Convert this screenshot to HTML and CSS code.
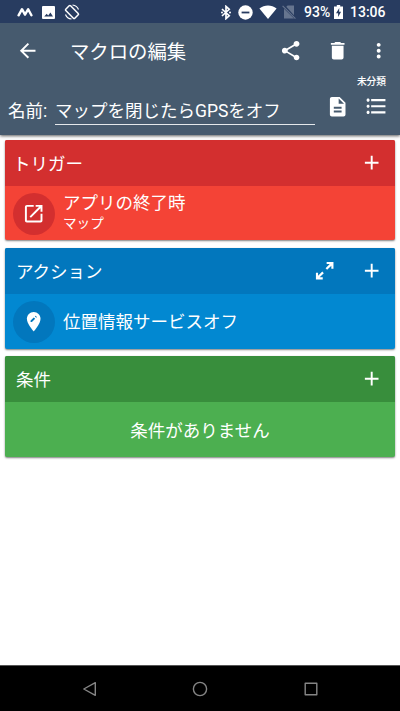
FILE: index.html
```html
<!DOCTYPE html>
<html lang="ja">
<head>
<meta charset="utf-8">
<title>マクロの編集</title>
<link rel="stylesheet" href="styles.css">
</head>
<body>
<div class="screen">
  <header class="top">
    <div class="status">
      <svg class="s-macro" viewBox="0 0 16 10"><path d="M1.6 8.3 5 2.2 8 7.6 11.2 2.2 14.4 8.3" fill="none" stroke="#fff" stroke-width="2.4" stroke-linejoin="round" stroke-linecap="round"/></svg>
      <svg class="s-image" viewBox="0 0 13 13"><rect width="13" height="13" rx="1" fill="#fff"/><path d="M2.2 10.6 4.7 7.8 6.2 9.4 8.4 6.6 11 10.6Z" fill="#283c60"/></svg>
      <svg class="s-rotate" viewBox="0 0 16 16"><path d="M1.500 10.500A7 7 0 0 0 7.500 15M14.500 5.500A7 7 0 0 0 8.500 1" fill="none" stroke="#fff" stroke-width="1.200"/><rect x="4.600" y="1.600" width="6.800" height="12.800" rx="1" transform="rotate(-45 8 8)" fill="none" stroke="#fff" stroke-width="1.500"/></svg>
      <span class="grow"></span>
      <svg class="s-bt" viewBox="0 0 10 15"><path d="M1 4 8.2 10.7 5 13.6V1.4L8.2 4.3 1 11" fill="none" stroke="#fff" stroke-width="1.700"/><circle cx="1" cy="7.5" r="1" fill="#fff"/><circle cx="9" cy="7.5" r="1" fill="#fff"/></svg>
      <svg class="s-dnd" viewBox="0 0 15 15"><circle cx="7.5" cy="7.5" r="7.2" fill="#fff"/><path d="M3.6 7.5H11.4" stroke="#283c60" stroke-width="1.8"/></svg>
      <svg class="s-wifi" viewBox="0 0 18 14"><path d="M.4 3.4C5.5-.5 12.5-.5 17.6 3.4L9 13.9Z" fill="#fff"/></svg>
      <svg class="s-sim" viewBox="0 0 14 14"><path d="M4.3 1.7 5.6.6H12V10.2ZM2 3.7 12 13.4H2Z" fill="#66758f"/><path d="M.6.8 13.4 13.6" stroke="#66758f" stroke-width="1.1"/></svg>
      <span class="pct">93%</span>
      <svg class="s-bat" viewBox="0 0 9 14"><path d="M2.8 0H6.2V1.4H9V14H0V1.4H2.8Z" fill="#fff"/><path d="M5.3 3 2 8.3H4.1V12L7.1 6.8H5.1Z" fill="#283c60"/></svg>
      <span class="clock">13:06</span>
    </div>
    <div class="toolbar">
      <svg class="icon back" viewBox="0 0 24 24"><path d="M20 11H7.83l5.59-5.59L12 4l-8 8 8 8 1.41-1.41L7.83 13H20v-2z"/></svg>
      <h1>マクロの編集</h1>
      <span class="grow"></span>
      <svg class="icon" viewBox="0 0 24 24"><path d="M18 16.08c-.76 0-1.44.3-1.96.77L8.91 12.7c.05-.23.09-.46.09-.7s-.04-.47-.09-.7l7.05-4.11c.54.5 1.25.81 2.04.81 1.66 0 3-1.34 3-3s-1.34-3-3-3-3 1.34-3 3c0 .24.04.47.09.7L8.04 9.81C7.5 9.31 6.79 9 6 9c-1.66 0-3 1.34-3 3s1.34 3 3 3c.79 0 1.5-.31 2.04-.81l7.12 4.16c-.05.21-.08.43-.08.65 0 1.61 1.31 2.92 2.92 2.92s2.92-1.31 2.92-2.92-1.31-2.92-2.92-2.92z"/></svg>
      <svg class="icon trash" viewBox="0 0 24 24"><path d="M6 19c0 1.1.9 2 2 2h8c1.1 0 2-.9 2-2V7H6v12zM19 4h-3.500l-1-1h-5l-1 1H5v2h14V4z"/></svg>
      <svg class="icon more" viewBox="0 0 24 24"><path d="M12 8c1.100 0 2-.9 2-2s-.9-2-2-2-2 .9-2 2 .9 2 2 2zm0 2c-1.100 0-2 .9-2 2s.9 2 2 2 2-.9 2-2-.9-2-2-2zm0 6c-1.100 0-2 .9-2 2s.9 2 2 2 2-.9 2-2-.9-2-2-2z"/></svg>
    </div>
    <div class="category">未分類</div>
    <div class="name-row">
      <span class="label">名前:</span>
      <span class="field">マップを閉じたらGPSをオフ</span>
      <svg class="icon doc" viewBox="0 0 24 24"><path d="M14 2H6c-1.100 0-1.990.9-1.990 2L4 20c0 1.100.89 2 1.990 2H18c1.100 0 2-.9 2-2V8l-6-6zm2 16H8v-2h8v2zm0-4H8v-2h8v2zm-3-5V3.500L18.500 9H13z"/></svg>
      <svg class="icon list" viewBox="0 0 24 24"><path d="M4 10.500c-.83 0-1.500.67-1.500 1.500s.67 1.500 1.500 1.500 1.500-.67 1.500-1.500-.67-1.500-1.500-1.500zm0-6c-.83 0-1.500.67-1.500 1.500S3.170 7.500 4 7.500 5.500 6.830 5.500 6 4.830 4.500 4 4.500zm0 12c-.83 0-1.500.68-1.500 1.500s.68 1.500 1.500 1.500 1.500-.68 1.500-1.500-.67-1.500-1.500-1.500zM7 19h14v-2H7v2zm0-6h14v-2H7v2zm0-8v2h14V5H7z"/></svg>
    </div>
  </header>
  <main>
    <section class="card red">
      <div class="head head-first"><h2>トリガー</h2><span class="grow"></span>
        <svg class="icon" viewBox="0 0 24 24"><path d="M19 13h-6v6h-2v-6H5v-2h6V5h2v6h6v2z"/></svg></div>
      <div class="body">
        <span class="badge"><svg class="icon" viewBox="0 0 24 24"><path d="M19 19H5V5h7V3H5c-1.110 0-2 .9-2 2v14c0 1.100.89 2 2 2h14c1.100 0 2-.9 2-2v-7h-2v7zM14 3v2h3.590l-9.830 9.830 1.410 1.410L19 6.410V10h2V3h-7z"/></svg></span>
        <div class="texts"><div class="main-text">アプリの終了時</div><div class="sub-text">マップ</div></div>
      </div>
    </section>
    <section class="card blue">
      <div class="head"><h2>アクション</h2><span class="grow"></span>
        <svg class="icon expand" viewBox="0 0 24 24"><path d="M14 3H21V10H18.800V6.800L14.500 11.100 12.900 9.500 17.200 5.200H14ZM10 21H3V14H5.200V17.200L9.500 12.900 11.100 14.500 6.800 18.800H10Z"/></svg>
        <svg class="icon" viewBox="0 0 24 24"><path d="M19 13h-6v6h-2v-6H5v-2h6V5h2v6h6v2z"/></svg></div>
      <div class="body">
        <span class="badge"><svg class="icon" viewBox="0 0 24 24"><path d="M12 2C8.130 2 5 5.130 5 9c0 5.250 7 13 7 13s7-7.750 7-13c0-3.870-3.130-7-7-7z"/><path class="pencil" d="M8.800 10.900V12.300H10.200L13.500 9 12.100 7.600ZM14.600 7.900 13.200 6.500 13.900 5.800 15.300 7.200Z"/></svg></span>
        <div class="texts"><div class="main-text">位置情報サービスオフ</div></div>
      </div>
    </section>
    <section class="card green">
      <div class="head"><h2>条件</h2><span class="grow"></span>
        <svg class="icon" viewBox="0 0 24 24"><path d="M19 13h-6v6h-2v-6H5v-2h6V5h2v6h6v2z"/></svg></div>
      <div class="body empty">条件がありません</div>
    </section>
  </main>
  <nav>
    <svg viewBox="0 0 16 16"><path d="M13.300 1.700V14.300L1.800 8Z"/></svg>
    <svg viewBox="0 0 16 16"><circle cx="8" cy="8" r="6.600"/></svg>
    <svg viewBox="0 0 16 16"><rect x="2.200" y="2.200" width="11.600" height="11.600"/></svg>
  </nav>
</div>
</body>
</html>
```
FILE: styles.css
```css
* { box-sizing: border-box; }
body {
  margin: 0;
  background: #fff;
  color: #fff;
  font-family: Roboto, "Noto Sans CJK JP", sans-serif;
  font-size: 17.5px;
}
h1, h2 { margin: 0; font-weight: 400; white-space: nowrap; }
svg { display: block; flex: none; }
.screen { width: 400px; height: 711px; display: flex; flex-direction: column; overflow: hidden; }
.grow { flex: 1; }
.icon { width: 23.4px; height: 23.4px; fill: #fff; }

.top { height: 135px; flex: none; background: #465a6e; box-shadow: 0 1px 3px rgba(0, 0, 0, .65); }
.status {
  height: 23px;
  display: flex;
  align-items: center;
  padding: 1px 16px 0 17px;
  background: #283c60;
  font-size: 14px;
  font-weight: 500;
}
.s-macro { width: 16px; height: 10px; }
.s-image { width: 13px; height: 13px; margin-left: 9px; }
.s-rotate { width: 16px; height: 16px; margin-left: 9px; }
.s-bt { width: 10px; height: 15px; margin-right: 7px; }
.s-dnd { width: 15px; height: 15px; margin-right: 6px; }
.s-wifi { width: 18px; height: 14px; margin-right: 5px; }
.s-sim { width: 14px; height: 14px; margin-right: 8px; }
.pct { width: 26px; white-space: nowrap; }
.s-bat { width: 9px; height: 14px; margin: 0 7px 0 4px; }
.clock { width: 34px; white-space: nowrap; }

.toolbar { height: 55px; display: flex; align-items: center; padding: 0 10px 0 15.5px; }
.toolbar h1 { margin-left: 31px; font-size: 19.4px; }
.trash { margin-left: 23.500px; }
.more { margin-left: 17px; }
.category { height: 12px; margin-top: -2px; padding-right: 14px; text-align: right; font-size: 9.7px; font-weight: 500; line-height: 12px; }
.name-row { height: 38px; display: flex; padding-left: 8px; line-height: 31px; }
.label { width: 47px; padding-top: 8px; }
.field { width: 260px; height: 37px; padding: 8px 0 0; border-bottom: 1px solid #e4e8eb; white-space: nowrap; }
.doc { margin: 7px 0 0 11px; }
.list { width: 24.5px; height: 24.5px; margin: 6px 0 0 15px; }

main { flex: 1; padding: 5px 5px 0; }
.card { height: 100px; margin-bottom: 8px; border-radius: 2px; overflow: hidden; box-shadow: 0 1px 2px rgba(0, 0, 0, .5); }
.blue, .green { height: 101px; }
.head { height: 46px; display: flex; align-items: center; padding: 0 12px 0 11px; }
.head h2 { font-size: 17.5px; }
.head-first { padding-left: 8px; }
.head-first h2 { margin-top: -2px; }
.expand { margin-right: 23.500px; }
.body { height: 55px; display: flex; align-items: center; padding-left: 8px; }
.badge { width: 42px; height: 42px; border-radius: 50%; display: flex; align-items: center; justify-content: center; }
.texts { margin-left: 8px; white-space: nowrap; }
.red .texts { margin-top: -4px; }
.main-text { line-height: 22px; }
.sub-text { font-size: 13.6px; line-height: 18px; }
.empty { justify-content: center; padding-left: 0; }
.red { background: #f44336; }
.red .head, .red .badge { background: #d32f2f; }
.blue { background: #0288d1; margin-bottom: 7px; }
.blue .head, .blue .badge { background: #0277bd; }
.blue .head h2, .green .head h2 { margin-top: -1px; }
.pencil { fill: #0277bd; }
.green { background: #4caf50; }
.green .head { background: #388e3c; }

nav { height: 46px; flex: none; display: flex; justify-content: center; align-items: center; gap: 94.500px; background: #000; border-top: 1px solid #555; }
nav svg { width: 16px; height: 16px; fill: none; stroke: #858585; stroke-width: 1.4; stroke-linejoin: round; }
```
